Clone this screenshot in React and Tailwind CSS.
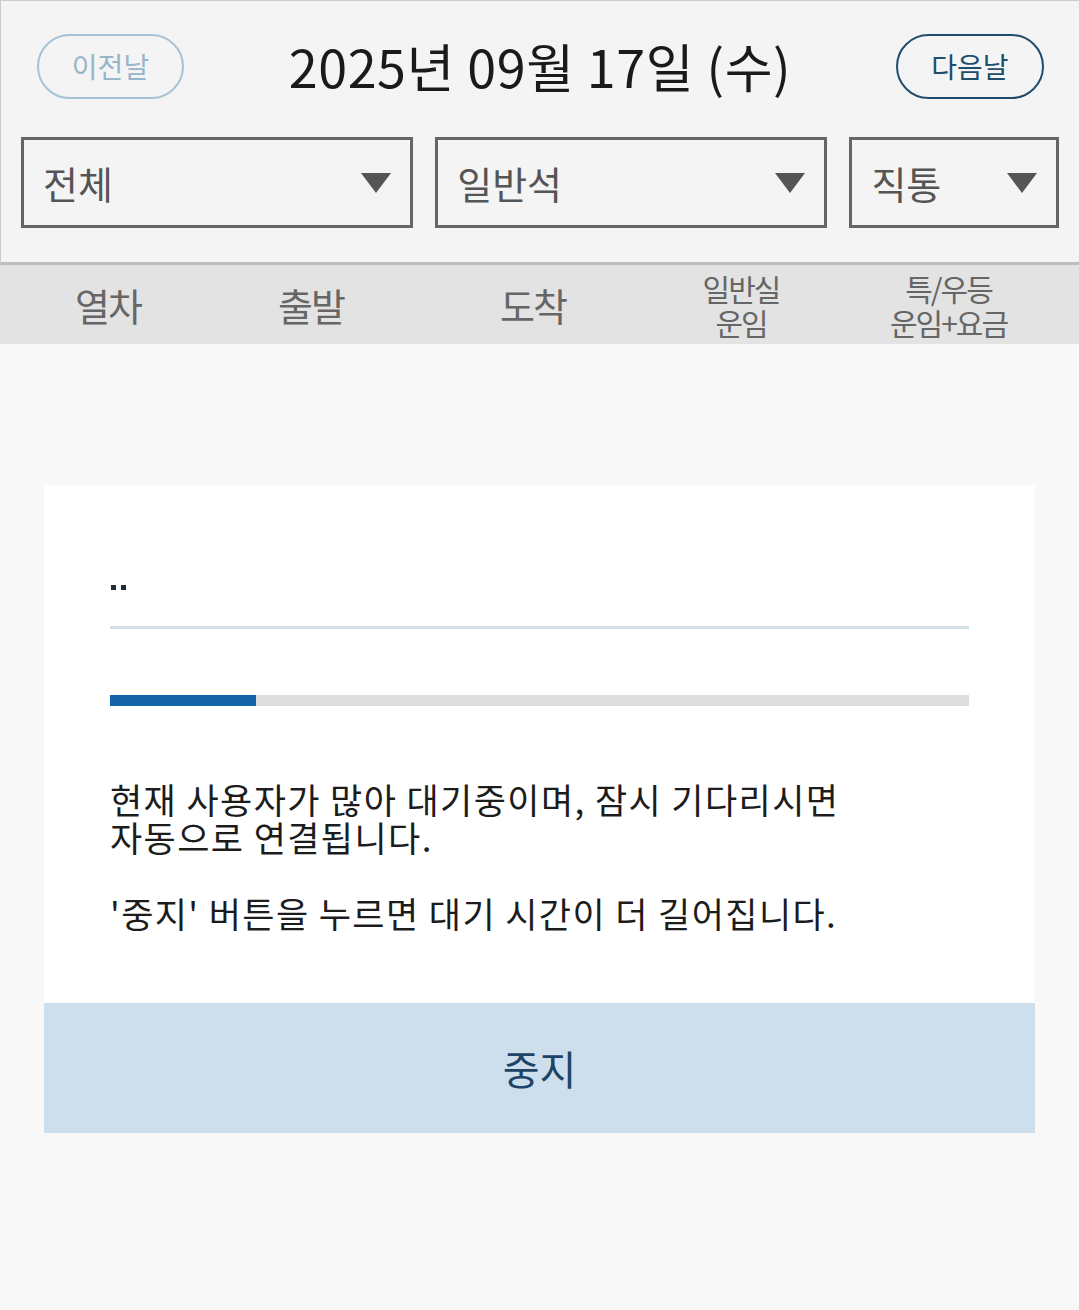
import React from "react";

const KR = { fontFamily: '"Noto Sans CJK KR", "Noto Sans", sans-serif' };

function Caret() {
  return (
    <svg width="30" height="20" viewBox="0 0 30 20" className="shrink-0">
      <polygon points="0,0 30,0 15,20" fill="#555555" />
    </svg>
  );
}

function Select({ label, className }) {
  return (
    <div
      className={`flex h-[91px] items-center justify-between border-[3px] border-[#666666] pl-[19px] pr-[19px] ${className}`}
    >
      <span className="text-[38px] leading-none text-[#555555]">{label}</span>
      <Caret />
    </div>
  );
}

export default function App() {
  return (
    <div className="min-h-[1310px] w-[1079px] bg-[#f8f8f8]" style={KR}>
      {/* top controls */}
      <div className="border-l border-t border-[#c9cdd0] border-b-[3px] border-b-[#bdbdbd] bg-[#f4f4f4] pb-[34px]">
        <div className="flex h-[130px] items-center justify-between pl-[36px] pr-[35px]">
          <button className="flex h-[65px] w-[147px] items-center justify-center rounded-full border-[2px] border-[#a6c3d6] text-[28px] text-[#98b6ca]">
            이전날
          </button>
          <div className="text-[52px] leading-none tracking-[0.6px] text-[#1a1a1a]">2025년 09월 17일 (수)</div>
          <button className="flex h-[65px] w-[148px] items-center justify-center rounded-full border-[2px] border-[#1f4d6d] text-[28px] text-[#1f4d6d]">
            다음날
          </button>
        </div>
        <div className="mt-[6px] flex gap-[22px] pl-[20px] pr-[20px]">
          <Select label="전체" className="w-[393px]" />
          <Select label="일반석" className="w-[393px]" />
          <Select label="직통" className="w-[210px]" />
        </div>
      </div>

      {/* table header */}
      <div className="grid h-[79px] grid-cols-[216px_190px_254px_162px_1fr] items-center bg-[#e3e3e3] text-[#666666]">
        <div className="text-center text-[38px] leading-none tracking-[-2px]">열차</div>
        <div className="text-center text-[38px] leading-none tracking-[-2px]">출발</div>
        <div className="text-center text-[38px] leading-none tracking-[-2px]">도착</div>
        <div className="text-center text-[30px] leading-[34px] tracking-[-2px]">
          일반실
          <br />
          운임
        </div>
        <div className="pr-[4px] text-center text-[30px] leading-[34px] tracking-[-2px]">
          특/우등
          <br />
          운임+요금
        </div>
      </div>

      {/* waiting card */}
      <div className="px-[44px] pt-[141px]">
        <div className="bg-white">
          <div className="px-[66px] pt-[100px] pb-[71px]">
            <div className="flex h-[41px] items-start gap-[5px] pl-[1px]">
              <div className="h-[5px] w-[5px] bg-[#1f2d3b]" />
              <div className="h-[5px] w-[5px] bg-[#1f2d3b]" />
            </div>
            <div className="h-[3px] w-full bg-[#d3dfe5]" />
            <div className="mt-[66px] h-[11px] w-full bg-[#dddddd]">
              <div className="h-full w-[146px] bg-[#1563a6]" />
            </div>
            <p className="mt-[74px] text-[35px] leading-[38px] tracking-[1.4px] text-[#1c1c1c]">
              현재 사용자가 많아 대기중이며, 잠시 기다리시면
              <br />
              자동으로 연결됩니다.
              <br />
              <br />
              '중지' 버튼을 누르면 대기 시간이 더 길어집니다.
            </p>
          </div>
          <button className="flex h-[130px] w-full items-center justify-center bg-[#cddeec] text-[40px] text-[#1d4466]">
            중지
          </button>
        </div>
      </div>
    </div>
  );
}
